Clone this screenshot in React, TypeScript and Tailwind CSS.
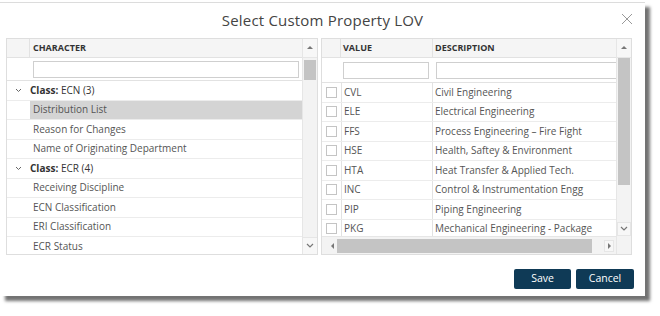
import React from 'react';

const FONT = { fontFamily: '"Open Sans", "Noto Sans", Arial, sans-serif' };

type Item = { kind: 'class'; label: string; count: string } | { kind: 'item'; label: string; selected?: boolean };

const characters: Item[] = [
  { kind: 'class', label: 'ECN', count: '(3)' },
  { kind: 'item', label: 'Distribution List', selected: true },
  { kind: 'item', label: 'Reason for Changes' },
  { kind: 'item', label: 'Name of Originating Department' },
  { kind: 'class', label: 'ECR', count: '(4)' },
  { kind: 'item', label: 'Receiving Discipline' },
  { kind: 'item', label: 'ECN Classification' },
  { kind: 'item', label: 'ERI Classification' },
  { kind: 'item', label: 'ECR Status' },
];

const values = [
  ['CVL', 'Civil Engineering'],
  ['ELE', 'Electrical Engineering'],
  ['FFS', 'Process Engineering – Fire Fight'],
  ['HSE', 'Health, Saftey & Environment'],
  ['HTA', 'Heat Transfer & Applied Tech.'],
  ['INC', 'Control & Instrumentation Engg'],
  ['PIP', 'Piping Engineering'],
  ['PKG', 'Mechanical Engineering - Package'],
];

const Arrow: React.FC<{ dir: 'up' | 'down' | 'left' | 'right' }> = ({ dir }) => {
  const pts = {
    up: '1,5 4,2 7,5',
    down: '1,2 4,5 7,2',
    left: '5,1 2,4 5,7',
    right: '3,1 6,4 3,7',
  }[dir];
  const filled = dir === 'up' || dir === 'left' || dir === 'right';
  return (
    <svg width="8" height="8" viewBox="0 0 8 8">
      {filled ? (
        <polygon points={pts} fill="#777" />
      ) : (
        <polyline points={pts} fill="none" stroke="#777" strokeWidth="1.2" />
      )}
    </svg>
  );
};

const LeftTable: React.FC = () => (
  <div className="w-[312px] h-[217px] border border-[#dedede] flex">
    <div className="flex-1 flex flex-col min-w-0 overflow-hidden">
      <div className="h-[19px] shrink-0 flex bg-[#f5f5f5] border-b border-[#e2e2e2]">
        <div className="w-[23px] border-r border-[#e2e2e2]" />
        <div className="flex-1 flex items-center pl-[3px] text-[9px] font-bold text-[#333]">CHARACTER</div>
      </div>
      <div className="h-[23px] shrink-0 flex items-center border-b border-[#e2e2e2]">
        <div className="w-[23px]" />
        <div className="flex-1 pl-[3px] pr-[3px]">
          <div className="h-[17px] border border-[#cfcfcf] bg-white" />
        </div>
      </div>
      {characters.map((c, i) => (
        <div key={i} className="h-[19.5px] shrink-0 flex items-center border-b border-[#ececec] text-[10px] text-[#555]">
          {c.kind === 'class' ? (
            <>
              <div className="w-[23px] flex items-center justify-center">
                <svg width="7" height="5" viewBox="0 0 7 5">
                  <polyline points="1,1 3.5,3.5 6,1" fill="none" stroke="#666" strokeWidth="1" />
                </svg>
              </div>
              <div className="text-[#333]">
                <span className="font-bold">Class:</span> {c.label} {c.count}
              </div>
            </>
          ) : (
            <>
              <div className="w-[23px] h-full" />
              <div className={`flex-1 h-full flex items-center pl-[3px] ${c.selected ? 'bg-[#d4d4d4]' : ''}`}>{c.label}</div>
            </>
          )}
        </div>
      ))}
    </div>
    <div className="w-[15px] flex flex-col bg-[#f3f3f3] border-l border-[#e6e6e6]">
      <div className="h-[19px] flex items-center justify-center border-b border-[#e6e6e6] bg-[#f7f7f7]">
        <Arrow dir="up" />
      </div>
      <div className="flex-1 relative">
        <div className="absolute left-[1px] right-[1px] top-[2px] h-[20px] bg-[#c4c4c4]" />
      </div>
      <div className="h-[17px] flex items-center justify-center border-t border-[#e6e6e6] bg-[#f7f7f7]">
        <Arrow dir="down" />
      </div>
    </div>
  </div>
);

const RightTable: React.FC = () => (
  <div className="w-[311px] h-[217px] border border-[#dedede] flex">
    <div className="flex-1 flex flex-col min-w-0 overflow-hidden">
      <div className="h-[19px] shrink-0 flex bg-[#f5f5f5] border-b border-[#e2e2e2] text-[9px] font-bold text-[#333]">
        <div className="w-[19px] border-r border-[#e2e2e2]" />
        <div className="w-[92px] flex items-center pl-[2px] border-r border-[#e2e2e2]">VALUE</div>
        <div className="flex-1 flex items-center pl-[2px]">DESCRIPTION</div>
      </div>
      <div className="h-[25px] shrink-0 flex items-center border-b border-[#e2e2e2]">
        <div className="w-[19px]" />
        <div className="w-[92px] pl-[2px] pr-[4px]">
          <div className="h-[17px] border border-[#cfcfcf] bg-white" />
        </div>
        <div className="flex-1 pl-[3px]">
          <div className="h-[17px] border border-[#cfcfcf] border-r-0 bg-white" />
        </div>
      </div>
      <div className="flex-1 overflow-hidden">
        {values.map(([v, d]) => (
          <div key={v} className="h-[19.5px] flex items-center border-b border-[#ececec] text-[10px] text-[#555]">
            <div className="w-[19px] h-full flex items-center justify-center">
              <div className="w-[11px] h-[11px] border border-[#c4c4c4] bg-white" />
            </div>
            <div className="w-[92px] h-full flex items-center pl-[2px] border-l border-r border-[#e2e2e2]">{v}</div>
            <div className="flex-1 pl-[2px] whitespace-nowrap">{d}</div>
          </div>
        ))}
      </div>
      <div className="h-[18px] shrink-0 flex items-center bg-[#f3f3f3] border-t border-[#e6e6e6]">
        <div className="w-[15px] flex items-center justify-end">
          <Arrow dir="left" />
        </div>
        <div className="w-[255px] h-[14px] bg-[#c4c4c4]" />
        <div className="flex-1" />
        <div className="w-[10px] mr-[2px] flex items-center justify-center border border-[#e6e6e6] h-[12px] bg-[#f7f7f7]">
          <Arrow dir="right" />
        </div>
      </div>
    </div>
    <div className="w-[15px] flex flex-col bg-[#f3f3f3] border-l border-[#e6e6e6]">
      <div className="h-[19px] flex items-center justify-center border-b border-[#e6e6e6] bg-[#f7f7f7]">
        <Arrow dir="up" />
      </div>
      <div className="flex-1 relative">
        <div className="absolute left-[1px] right-[1px] top-0 h-[127px] bg-[#c4c4c4]" />
      </div>
      <div className="h-[14px] flex items-center justify-center border border-[#e6e6e6] bg-[#f7f7f7]">
        <Arrow dir="down" />
      </div>
      <div className="h-[18px]" />
    </div>
  </div>
);

export default function App() {
  return (
    <div className="w-[660px] h-[316px] bg-white overflow-hidden" style={FONT}>
      <div className="w-[645px] h-[294px] mt-[2px] bg-white border-t border-[#dcdcdc] shadow-[5px_5px_3px_rgba(0,0,0,0.55)] flex flex-col">
        <div className="h-[35px] relative flex items-center justify-center">
          <span className="text-[15px] text-[#444] tracking-[0.2px]">Select Custom Property LOV</span>
          <svg className="absolute right-[12px] top-[10px]" width="12" height="12" viewBox="0 0 12 12">
            <path d="M1 1 L11 11 M11 1 L1 11" stroke="#999" strokeWidth="1" />
          </svg>
        </div>
        <div className="flex gap-[3px] pl-[6px]">
          <LeftTable />
          <RightTable />
        </div>
        <div className="flex justify-end gap-[5px] pr-[11px] mt-[14px]">
          <button className="w-[57px] h-[20px] rounded-[2px] bg-[#0f3a56] text-white text-[10.5px]">Save</button>
          <button className="w-[58px] h-[20px] rounded-[2px] bg-[#0f3a56] text-white text-[10.5px]">Cancel</button>
        </div>
      </div>
    </div>
  );
}
